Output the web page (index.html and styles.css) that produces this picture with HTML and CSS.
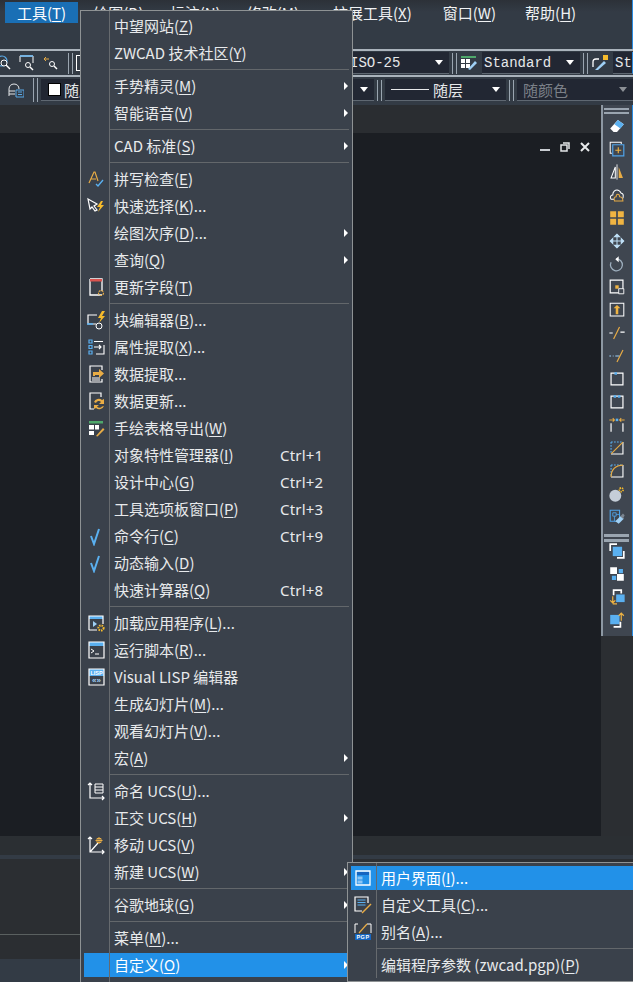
FILE: index.html
```
<!DOCTYPE html>
<html lang="zh">
<head>
<meta charset="utf-8">
<title>ZWCAD 工具菜单</title>
<link rel="stylesheet" href="styles.css">
</head>
<body>
<div class="app">
  <nav class="menubar">
    <span class="mb-item active">工具(<u>T</u>)</span>
    <span class="mb-item">绘图(<u>D</u>)</span>
    <span class="mb-item">标注(<u>N</u>)</span>
    <span class="mb-item gap-x">修改(<u>M</u>)</span>
    <span class="mb-item wide">扩展工具(<u>X</u>)</span>
    <span class="mb-item gap-h">窗口(<u>W</u>)</span>
    <span class="mb-item">帮助(<u>H</u>)</span>
  </nav>

  <div class="toolbar row-one">
    <svg class="tb-ic zoom-a" viewBox="0 0 14 16"><circle cx="3" cy="6" r="5" fill="none" stroke="#5aa9e6" stroke-width="1.2"/><circle cx="5" cy="8" r="3" fill="#333b45" stroke="#fff"/><path d="M7 10l4 4" stroke="#fff" stroke-width="1.4"/></svg>
    <svg class="tb-ic" viewBox="0 0 16 16"><path d="M1 7V1h13v7M1 1h13" fill="none" stroke="#fff"/><path d="M1 1h13" stroke="#5aa9e6" stroke-width="1.5"/><circle cx="9" cy="10" r="2.5" fill="none" stroke="#fff"/><path d="M11 12l3 3" stroke="#fff" stroke-width="1.4"/></svg>
    <svg class="tb-ic" viewBox="0 0 16 16"><path d="M1 4h5M3 2L1 4l2 2" fill="none" stroke="#e8ac45"/><circle cx="9" cy="9" r="2.5" fill="none" stroke="#fff"/><path d="M11 11l3 3" stroke="#fff" stroke-width="1.4"/></svg>
    <span class="grip grip-a"></span>
    <span class="ghost-box"></span>
    <span class="dd dd-iso"><span class="dd-text mono">ISO-25</span><i class="caret"></i></span>
    <span class="grip"></span>
    <svg class="tb-ic table-ic" viewBox="0 0 16 14"><path d="M0 0h15v2H0z" fill="#4fa86b"/><path d="M0 3h4v4H0zM5 3h4v4H5zM0 8h4v4H0zM5 8h4v4H5z" fill="#fff"/><path d="M7 13l7-8 2 2-7 7z" fill="#9fd0f5"/></svg>
    <span class="dd dd-std"><span class="dd-text mono">Standard</span><i class="caret"></i></span>
    <span class="grip"></span>
    <svg class="tb-ic ml-ic" viewBox="0 0 16 16"><path d="M1 12V7c0-2 1-3 3-3h3" fill="none" stroke="#fff" stroke-width="1.3"/><path d="M11 0h5v5h-5z" fill="#f6bb2c"/><path d="M3 15l9-9 2 2-8 7z" fill="#9fd0f5"/></svg>
    <span class="dd dd-st"><span class="dd-text mono">St</span></span>
  </div>

  <div class="toolbar row-two">
    <svg class="tb-ic layer-ic" viewBox="0 0 16 16"><path d="M1 14V7c0-3 2-5 5-5s5 2 5 5M1 9h6M1 12h6" fill="none" stroke="#e3e6e9"/><path d="M8 8h8v7H8z" fill="none" stroke="#5aa9e6"/><path d="M10 10h4M10 12.500h4" stroke="#5aa9e6"/></svg>
    <span class="grip grip-b"></span>
    <span class="dd dd-color"><span class="swatch"></span><span class="dd-text">随层</span><i class="caret"></i></span>
    <span class="grip"></span>
    <span class="dd dd-line"><span class="line-sample"></span><span class="dd-text">随层</span><i class="caret"></i></span>
    <span class="grip"></span>
    <span class="dd dd-plot"><span class="dd-text dim">随颜色</span><i class="caret dimc"></i></span>
  </div>

  <main class="work">
    <div class="canvas">
      <div class="tabs-band"></div>
      <div class="drawing">
        <div class="win-btns">
          <svg class="win-ic" viewBox="0 0 10 10"><path d="M0 7h10v2H0z" fill="#c9cdd1"/></svg>
          <svg class="win-ic" viewBox="0 0 10 10"><path d="M3 1h6v6M1 3h6v6H1z" fill="none" stroke="#e4e6e8" stroke-width="1.5"/></svg>
          <svg class="win-ic" viewBox="0 0 10 10"><path d="M1 1l8 8M9 1L1 9" stroke="#e8eaec" stroke-width="2"/></svg>
        </div>
      </div>
    </div>
    <aside class="sidetools">
      <span class="vgrip"></span>
      <svg class="st" viewBox="0 0 20 20"><path d="M2 13L11 3l7 5-8 9H6z" fill="#fff"/><path d="M11 3l7 5-4 5-7-5z" fill="#5ab0f0"/></svg>
      <svg class="st" viewBox="0 0 20 20"><path d="M4 15H2V2h13v2" fill="none" stroke="#fff" stroke-width="1.2"/><path d="M5 5h13v13H5z" fill="none" stroke="#4fa3e8" stroke-width="1.4"/><path d="M11.500 8v7M8 11.500h7" stroke="#f0b442" stroke-width="1.3"/></svg>
      <svg class="st" viewBox="0 0 20 20"><path d="M8 4v13H3z" fill="none" stroke="#fff" stroke-width="1.2"/><path d="M10 1v18" stroke="#fff"/><path d="M12 4l5 13h-5z" fill="#e8ac45"/></svg>
      <svg class="st" viewBox="0 0 20 20"><path d="M3 15c-2-3 0-5 2-5 0-4 3-6 5-6 3 0 4 2 5 4 3 0 3 5 1 7z" fill="none" stroke="#fff" stroke-width="1.2"/><path d="M7 17c-1-3 0-5 2-5 0-2 1-3 2-3s2 1 2 3c2 0 4 2 4 5z" fill="#3f4650" stroke="#e8ac45" stroke-width="1.2"/></svg>
      <svg class="st" viewBox="0 0 20 20"><path d="M2 2h7v7H2zM11 2h7v7h-7zM2 11h7v7H2zM11 11h7v7h-7z" fill="#f0b442"/></svg>
      <svg class="st" viewBox="0 0 20 20"><path d="M10 2v16M2 10h16M10 2L7 5h6zM10 18l-3-3h6zM2 10l3-3v6zM18 10l-3-3v6z" fill="#bfe0f7" stroke="#bfe0f7" stroke-width="1.2"/></svg>
      <svg class="st" viewBox="0 0 20 20"><path d="M9 4a7 7 0 1 1-6 4" fill="none" stroke="#9fb0bf" stroke-width="1.5"/><path d="M12 1v7L8 4.500z" fill="#fff"/></svg>
      <svg class="st" viewBox="0 0 20 20"><path d="M2 2h15v15H2z" fill="none" stroke="#fff" stroke-width="1.4"/><path d="M8 8h4v4H8z" fill="#f0b442"/><path d="M12 12h6v6h-6z" fill="#3f4650" stroke="#fff"/></svg>
      <svg class="st" viewBox="0 0 20 20"><path d="M2 2h16v15H2z" fill="none" stroke="#fff" stroke-width="1.2"/><path d="M10 4l4 4h-2.500v7h-3V8H6z" fill="#f0b442"/></svg>
      <svg class="st" viewBox="0 0 20 20"><path d="M1 10h4M14 9h5" stroke="#fff" stroke-width="1.3"/><path d="M6 17L13 3" stroke="#e8ac45" stroke-width="1.4"/></svg>
      <svg class="st" viewBox="0 0 20 20"><path d="M1 10h2M5 10h1M8 10h5" stroke="#9fd0f5" stroke-width="1.3"/><path d="M10 17L17 3" stroke="#e8ac45" stroke-width="1.4"/></svg>
      <svg class="st" viewBox="0 0 20 20"><path d="M3 3h14v14H3z" fill="none" stroke="#fff" stroke-width="1.4"/><path d="M7 2h3v3H7z" fill="#5ab0f0"/></svg>
      <svg class="st" viewBox="0 0 20 20"><path d="M3 3h14v14H3z" fill="none" stroke="#fff" stroke-width="1.4"/><path d="M6 2h3v3H6zM11 2h3v3h-3z" fill="#5ab0f0"/></svg>
      <svg class="st" viewBox="0 0 20 20"><path d="M3 18V8M17 18V8" stroke="#fff" stroke-width="1.4"/><path d="M1 4h6M5 2l2 2-2 2M19 4h-6M15 2l-2 2 2 2" fill="none" stroke="#e8ac45" stroke-width="1.2"/><path d="M8.500 2.500h3v3h-3z" fill="#5ab0f0"/></svg>
      <svg class="st" viewBox="0 0 20 20"><path d="M3 17h14V3" fill="none" stroke="#fff" stroke-width="1.3"/><path d="M3 3h14M3 3v14" stroke="#5ab0f0" stroke-dasharray="2 1.500" stroke-width="1.3"/><path d="M3 17L17 3" stroke="#e8ac45" stroke-width="1.3"/></svg>
      <svg class="st" viewBox="0 0 20 20"><path d="M17 3v14H3" fill="none" stroke="#fff" stroke-width="1.3"/><path d="M3 3h14M3 3v14" stroke="#5ab0f0" stroke-dasharray="2 1.500" stroke-width="1.3"/><path d="M3 17C3 9 8 3 17 3" fill="none" stroke="#e8ac45" stroke-width="1.4"/></svg>
      <svg class="st" viewBox="0 0 20 20"><circle cx="8" cy="12" r="7" fill="#c5ced8"/><circle cx="15" cy="5" r="2.200" fill="none" stroke="#f6bb2c" stroke-width="2" stroke-dasharray="1.500 1"/></svg>
      <svg class="st" viewBox="0 0 20 20"><path d="M2 2h11v13H2z" fill="none" stroke="#4fa3e8" stroke-width="1.3"/><path d="M5 5h4v4H5zM9 7h4M7 9v6" fill="none" stroke="#4fa3e8"/><path d="M8 15l6-6 4 3-6 6z" fill="#9fd0f5"/><path d="M14 9l3-3 2 2-2 4z" fill="#7b8590"/></svg>
      <span class="vgrip second"></span>
      <svg class="st" viewBox="0 0 20 20"><path d="M2 10V2h8M18 10v8h-8" fill="none" stroke="#fff" stroke-width="2"/><path d="M5 5h11v11H5z" fill="#5ab0f0"/></svg>
      <svg class="st" viewBox="0 0 20 20"><path d="M2 2h8v8H2zM10 10h8v8h-8z" fill="#fff"/><path d="M12 4h5v5h-5zM4 12h5v5H4z" fill="#5ab0f0"/></svg>
      <svg class="st" viewBox="0 0 20 20"><path d="M6 8V2h9v4" fill="none" stroke="#fff" stroke-width="2"/><path d="M9 7h10v9H9z" fill="#5ab0f0"/><path d="M5 9v8M2 14l3 3 3-3M5 18h5" fill="none" stroke="#f0b442" stroke-width="1.4"/></svg>
      <svg class="st" viewBox="0 0 20 20"><path d="M2 4h11v11H2z" fill="#5ab0f0"/><path d="M14 12v6H6" fill="none" stroke="#fff" stroke-width="2"/><path d="M15 11V3M12 5l3-3 3 3" fill="none" stroke="#f0b442" stroke-width="1.4"/></svg>
    </aside>
  </main>

  <section class="lower">
    <div class="lw-tabs"></div>
    <div class="lw-strip"></div>
    <div class="lw-cmd"></div>
    <div class="lw-input"></div>
    <div class="lw-status"></div>
  </section>
</div>

<div class="menu main-menu">
  <div class="item"><span></span><span>中望网站(<u>Z</u>)</span></div>
  <div class="item"><span></span><span>ZWCAD 技术社区(<u>Y</u>)</span></div>
  <div class="sep"></div>
  <div class="item"><span></span><span>手势精灵(<u>M</u>)</span><span></span><i class="arrow"></i></div>
  <div class="item"><span></span><span>智能语音(<u>V</u>)</span><span></span><i class="arrow"></i></div>
  <div class="sep"></div>
  <div class="item"><span></span><span>CAD 标准(<u>S</u>)</span><span></span><i class="arrow"></i></div>
  <div class="sep"></div>
  <div class="item"><svg class="ic" viewBox="0 0 20 20"><path d="M3 14L8 3h1l3 9M5 10h5" fill="none" stroke="#e8ac45" stroke-width="1.2"/><path d="M10 15l2 2 5-6" fill="none" stroke="#5ab0f0" stroke-width="1.4"/></svg><span>拼写检查(<u>E</u>)</span></div>
  <div class="item"><svg class="ic" viewBox="0 0 20 20"><path d="M2 3l9 5-3 2 3 4-2 1-3-4-2 2z" fill="none" stroke="#fff" stroke-width="1.2"/><path d="M15 5l-4 6h3l-2 5 6-7h-3l2-4z" fill="#f6bb2c"/></svg><span>快速选择(<u>K</u>)...</span></div>
  <div class="item"><span></span><span>绘图次序(<u>D</u>)...</span><span></span><i class="arrow"></i></div>
  <div class="item"><span></span><span>查询(<u>Q</u>)</span><span></span><i class="arrow"></i></div>
  <div class="item"><svg class="ic" viewBox="0 0 20 20"><path d="M4 2h12v12M16 18H4V2" fill="none" stroke="#fff" stroke-width="1.3"/><path d="M4 2h12v2.500H4z" fill="#d9534f"/><circle cx="15" cy="16" r="2.500" fill="none" stroke="#e8ac45" stroke-width="1.2" stroke-dasharray="2 1"/></svg><span>更新字段(<u>T</u>)</span></div>
  <div class="sep"></div>
  <div class="item"><svg class="ic" viewBox="0 0 20 20"><path d="M11 5H2v9h8" fill="none" stroke="#fff" stroke-width="1.2"/><path d="M1 14h6" stroke="#5ab0f0" stroke-width="1.500"/><path d="M16 1l-4 7h3l-2 5 6-7h-3l3-5z" fill="#f6bb2c"/><circle cx="13" cy="16" r="3" fill="none" stroke="#fff"/></svg><span>块编辑器(<u>B</u>)...</span></div>
  <div class="item"><svg class="ic" viewBox="0 0 20 20"><path d="M3 3h3v3H3zM3 8.500h3v3H3zM3 14h3v3H3z" fill="none" stroke="#5ab0f0" stroke-width="1.200"/><path d="M8 4.500h9M8 10h7M13 8l2 2-2 2M18 8v9h-8" fill="none" stroke="#fff" stroke-width="1.100"/></svg><span>属性提取(<u>X</u>)...</span></div>
  <div class="item"><svg class="ic" viewBox="0 0 20 20"><path d="M16 6V2H4v16h12v-3" fill="none" stroke="#fff" stroke-width="1.200"/><path d="M6 14h8M6 16h8" stroke="#fff"/><path d="M7 12V8h6V5l5 4.500-5 4.500v-3H9v1z" fill="#e8ac45"/></svg><span>数据提取...</span></div>
  <div class="item"><svg class="ic" viewBox="0 0 20 20"><path d="M15 6V2H4v16h4" fill="none" stroke="#fff" stroke-width="1.200"/><path d="M8 11a5 5 0 0 1 8-2l2-1v5h-5l2-2a3 3 0 0 0-5 1zM18 15a5 5 0 0 1-8 2l-2 1v-4h5l-2 1.500a3 3 0 0 0 5 0z" fill="#e8ac45"/></svg><span>数据更新...</span></div>
  <div class="item"><svg class="ic" viewBox="0 0 20 20"><path d="M3 3h14v2.500H3z" fill="#4fa86b"/><path d="M3 7h5v4.500H3zM3 13h5v4H3zM9 7h4v4.500H9z" fill="#fff"/><path d="M10 18l7-8 1.500 1.500-7 7zM14 17h4" fill="#e8ac45"/></svg><span>手绘表格导出(<u>W</u>)</span></div>
  <div class="item"><span></span><span>对象特性管理器(<u>I</u>)</span><span class="key">Ctrl+1</span></div>
  <div class="item"><span></span><span>设计中心(<u>G</u>)</span><span class="key">Ctrl+2</span></div>
  <div class="item"><span></span><span>工具选项板窗口(<u>P</u>)</span><span class="key">Ctrl+3</span></div>
  <div class="item"><svg class="ic" viewBox="0 0 20 20"><path d="M5 10l3 8 5-15" fill="none" stroke="#5ab0f0" stroke-width="2"/></svg><span>命令行(<u>C</u>)</span><span class="key">Ctrl+9</span></div>
  <div class="item"><svg class="ic" viewBox="0 0 20 20"><path d="M5 10l3 8 5-15" fill="none" stroke="#5ab0f0" stroke-width="2"/></svg><span>动态输入(<u>D</u>)</span></div>
  <div class="item"><span></span><span>快速计算器(<u>Q</u>)</span><span class="key">Ctrl+8</span></div>
  <div class="sep"></div>
  <div class="item"><svg class="ic" viewBox="0 0 20 20"><path d="M3 3h14v3H3z" fill="#5ab0f0"/><path d="M3 17V3h14v8M3 17h8" fill="none" stroke="#fff" stroke-width="1.200"/><path d="M7 8l4 3-4 3z" fill="#9fd0f5"/><circle cx="15" cy="15" r="2.600" fill="none" stroke="#f6bb2c" stroke-width="2" stroke-dasharray="1.500 1"/></svg><span>加载应用程序(<u>L</u>)...</span></div>
  <div class="item"><svg class="ic" viewBox="0 0 20 20"><path d="M3 2h15v4H3z" fill="#5ab0f0"/><path d="M3 2h15v16H3z" fill="none" stroke="#fff" stroke-width="1.200"/><path d="M5 9l3 2-3 2M9 14h4" fill="none" stroke="#fff"/></svg><span>运行脚本(<u>R</u>)...</span></div>
  <div class="item"><svg class="ic" viewBox="0 0 20 20"><path d="M3 2h15v7H3z" fill="#5ab0f0"/><path d="M3 2h15v16H3z" fill="none" stroke="#fff" stroke-width="1.200"/><text x="10.500" y="8" class="svg-t lisp">LISP</text><text x="10.500" y="15.500" class="svg-t quote">«»</text></svg><span>Visual LISP 编辑器</span></div>
  <div class="item"><span></span><span>生成幻灯片(<u>M</u>)...</span></div>
  <div class="item"><span></span><span>观看幻灯片(<u>V</u>)...</span></div>
  <div class="item"><span></span><span>宏(<u>A</u>)</span><span></span><i class="arrow"></i></div>
  <div class="sep"></div>
  <div class="item"><svg class="ic" viewBox="0 0 20 20"><path d="M4 2v15h14M2 4l2-2 2 2M16 15l2 2-2 2" fill="none" stroke="#fff" stroke-width="1.200"/><path d="M9 3h8v9H9zM9 6h8M9 9h8" fill="none" stroke="#fff"/></svg><span>命名 UCS(<u>U</u>)...</span></div>
  <div class="item"><span></span><span>正交 UCS(<u>H</u>)</span><span></span><i class="arrow"></i></div>
  <div class="item"><svg class="ic" viewBox="0 0 20 20"><path d="M4 2v15h14M2 4l2-2 2 2M16 15l2 2-2 2M4 17L12 8" fill="none" stroke="#fff" stroke-width="1.200"/><path d="M13 2v7M9.500 5.500h7M11 3.500h4v4h-4z" fill="none" stroke="#e8ac45"/></svg><span>移动 UCS(<u>V</u>)</span></div>
  <div class="item"><span></span><span>新建 UCS(<u>W</u>)</span><span></span><i class="arrow"></i></div>
  <div class="sep"></div>
  <div class="item"><span></span><span>谷歌地球(<u>G</u>)</span><span></span><i class="arrow"></i></div>
  <div class="sep"></div>
  <div class="item"><span></span><span>菜单(<u>M</u>)...</span></div>
  <div class="item on"><span></span><span>自定义(<u>O</u>)</span><span></span><i class="arrow"></i></div>
</div>

<div class="menu sub-menu">
  <div class="item on"><svg class="ic" viewBox="0 0 20 20"><path d="M3 3h14v14H3z" fill="none" stroke="#fff" stroke-width="1.300"/><path d="M4 4h12v3H4z" fill="#1565c0"/><path d="M4.500 8.500h5v3h-5zM4.500 12.500h5v3h-5z" fill="#8cc6f5"/></svg><span>用户界面(<u>I</u>)...</span></div>
  <div class="item"><svg class="ic" viewBox="0 0 20 20"><path d="M15 8V2H2v14h7" fill="none" stroke="#fff" stroke-width="1.200"/><path d="M4.500 5h8M4.500 7.500h8M4.500 10h8" stroke="#5ab0f0" stroke-width="1.200"/><path d="M9 18L18 9" stroke="#e8ac45" stroke-width="1.500"/></svg><span>自定义工具(<u>C</u>)...</span></div>
  <div class="item"><svg class="ic" viewBox="0 0 20 20"><path d="M2 11V2h3M14 2h4v9" fill="none" stroke="#fff"/><path d="M6 11L14 2" stroke="#e8ac45" stroke-width="1.200"/><path d="M2 12h16v6H2z" fill="#1565c0"/><text x="10" y="17" class="svg-t pgp">PGP</text></svg><span>别名(<u>A</u>)...</span></div>
  <div class="sep"></div>
  <div class="item"><span></span><span>编辑程序参数 (zwcad.pgp)(<u>P</u>)</span></div>
</div>
</body>
</html>
```

FILE: styles.css
```
* { box-sizing: border-box; }
html, body { margin: 0; height: 982px; overflow: hidden; }
body {
  position: relative;
  width: 633px;
  background: #333b45;
  color: #e8eaec;
  font: 15px/24px "Noto Sans CJK SC", "Noto Sans", sans-serif;
}
u { text-underline-offset: 2px; }
.app { height: 982px; display: flex; flex-direction: column; }

.menubar {
  height: 49px;
  flex: none;
  display: flex;
  align-items: flex-start;
  padding: 2px 0 0 5px;
  background: linear-gradient(#2c3138, #333b45 12px);
  border-right: 1px solid #2a8be0;
}
.mb-item { height: 21px; line-height: 21px; padding: 0 13px; white-space: nowrap; color: #f0f2f4; }
.mb-item.active { background: #1a6fb5; padding: 0 12px; color: #fff; margin-right: 2px; }
.mb-item.gap-x { margin-right: 8px; }
.mb-item.wide { margin-right: 5px; }
.mb-item.gap-h { margin-right: 3px; }

.toolbar { flex: none; display: flex; align-items: center; background: #333b45; }
.row-one { height: 28px; border-top: 2px solid #aab3bc; border-bottom: 2px solid #aab3bc; }
.row-two { height: 28px; padding-bottom: 2px; background: #333b45; }
.tb-ic { flex: none; width: 16px; height: 16px; }
.zoom-a { margin-left: -1px; margin-right: 6px; width: 14px; }
.row-one .tb-ic + .tb-ic { margin-right: 8px; }
.grip { flex: none; width: 5px; height: 21px; border-left: 1px solid #9aa5b0; border-right: 1px solid #9aa5b0; margin: 0 3px; }
.grip-a { margin-left: 1px; }
.ghost-box { flex: none; width: 5px; height: 16px; margin-right: 269px; border: 1px solid #fff; }
.dd {
  flex: none;
  display: flex;
  align-items: center;
  height: 22px;
  background: #222733;
  border-bottom: 1px solid #5f6872;
  padding: 0 6px 0 2px;
  color: #e6e8ea;
}
.dd-text { white-space: nowrap; }
.mono { font: 14px/20px "Liberation Mono", monospace; }
.dim { color: #7b8088; }
.caret {
  margin-left: auto;
  width: 0; height: 0;
  border-left: 4px solid transparent;
  border-right: 4px solid transparent;
  border-top: 5px solid #fff;
}
.caret.dimc { border-top-color: #8c9096; }
.dd-iso { width: 99px; padding-left: 0; }
.row-one .table-ic { margin: 0 5px 0 1px; height: 14px; }
.dd-std { width: 98px; }
.row-one .ml-ic { margin: 0 5px 0 1px; }
.dd-st { flex: 1; padding-right: 0; border-right: 1px solid #2a8be0; }

.layer-ic { margin: 0 9px 0 8px; }
.grip-b { margin: 0 3px 0 0; height: 24px; }
.dd-color { width: 333px; padding-left: 7px; }
.swatch { flex: none; width: 13px; height: 13px; background: #fff; border: 1px solid #000; margin-right: 3px; }
.dd-line { width: 121px; padding-left: 6px; }
.line-sample { flex: none; width: 38px; height: 1px; background: #e6e8ea; margin-right: 4px; }
.dd-plot { flex: 1; padding-left: 6px; }

.work { flex: 1; display: flex; min-height: 0; background: #2b2e32; }
.canvas { flex: 1; display: flex; flex-direction: column; min-width: 0; }
.tabs-band { height: 28px; flex: none; background: #2a2d31; }
.drawing { flex: 1; background: #1b1e23; padding: 9px 11px 0 0; }
.win-btns { display: flex; justify-content: flex-end; gap: 10px; }
.win-ic { width: 10px; height: 10px; }

.sidetools {
  flex: none;
  width: 32px;
  height: 531px;
  display: flex;
  flex-direction: column;
  align-items: center;
  gap: 3px;
  padding: 2px 3px 0 1px;
  background: #3f4650;
  border-left: 2px solid #8d98a3;
  border-right: 1px solid #2a8be0;
}
.vgrip {
  flex: none;
  width: 100%;
  height: 6px;
  margin: 1px 0 -1px;
  border-top: 2px solid #9aa5b0;
  border-bottom: 2px solid #9aa5b0;
}
.vgrip.second { margin: 4px 0 -4px; border-top-width: 3px; border-bottom-width: 3px; height: 8px; }
.st { flex: none; width: 20px; height: 20px; padding: 1.5px; }

.lower { flex: none; height: 146px; display: flex; flex-direction: column; background: #2b2e32; }
.lw-tabs { height: 19px; flex: none; background: #2b2f33; }
.lw-strip { height: 4px; flex: none; background: #333b45; }
.lw-cmd { height: 76px; flex: none; border-bottom: 1px solid #5a6060; }
.lw-input { height: 24px; flex: none; }
.lw-status { flex: 1; background: #333b45; }

.menu {
  position: absolute;
  overflow: hidden;
  background: #3a414b;
  border: 1px solid #8e9294;
}
.menu::before {
  content: "";
  position: absolute;
  top: 0;
  bottom: 0;
  width: 1px;
  background: #666a6e;
  z-index: 1;
}
.main-menu { left: 80px; top: 10px; width: 273px; height: 980px; padding: 3px; }
.main-menu::before { left: 28px; }
.sub-menu { left: 347px; top: 862px; width: 300px; height: 120px; padding: 3px; }
.sub-menu::before { left: 28px; bottom: 3px; }
.item {
  height: 24px;
  margin-bottom: 3px;
  display: grid;
  grid-template-columns: 30px 166px 1fr auto;
  align-items: center;
  white-space: nowrap;
}
.item > :first-child { justify-self: start; margin-left: 2px; }
.sub-menu .item { grid-template-columns: 30px 1fr; }
.item.on { background: #2291e8; color: #fff; }
.ic { width: 20px; height: 20px; }
.key { font-family: "Noto Sans", sans-serif; letter-spacing: .2px; }
.arrow {
  width: 0; height: 0;
  margin-right: 1px;
  border-top: 4px solid transparent;
  border-bottom: 4px solid transparent;
  border-left: 4px solid #fff;
}
.sep { height: 1px; margin: 4px 0 4px 26px; background: #63676b; }
.svg-t { font-family: "Liberation Sans", sans-serif; font-weight: 700; text-anchor: middle; fill: #fff; }
.lisp { font-size: 5.500px; }
.quote { font-size: 8px; fill: #9fd0f5; }
.pgp { font-size: 5.500px; letter-spacing: .5px; }
```
